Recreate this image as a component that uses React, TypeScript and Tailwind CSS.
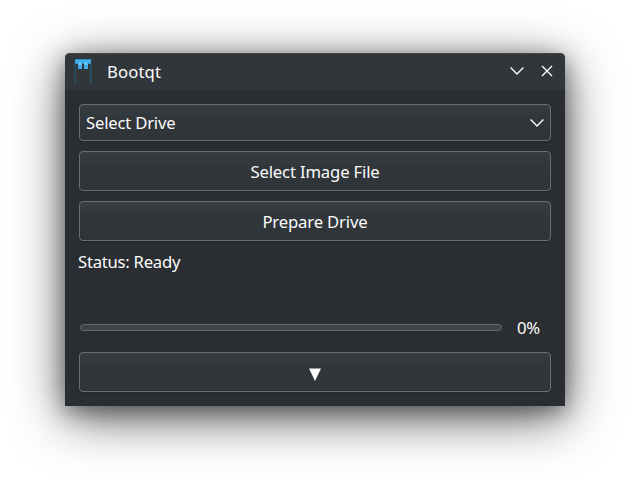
import type { ReactNode } from "react";

function Chevron({ className }: { className?: string }) {
  return (
    <svg className={className} width="16" height="10" viewBox="0 0 16 10" fill="none" stroke="#fcfcfc" strokeWidth="1.4">
      <path d="M1.6 1.6 L8 8 L14.4 1.6" />
    </svg>
  );
}

function AppIcon() {
  return (
    <svg width="18" height="24" viewBox="0 0 18 24" shapeRendering="crispEdges">
      <rect x="0" y="3" width="1" height="21" fill="#294454" />
      <rect x="1" y="3" width="1" height="21" fill="#2c4f63" />
      <rect x="16" y="3" width="1" height="21" fill="#2c566d" />
      <rect x="17" y="3" width="1" height="21" fill="#294454" />
      <rect x="1" y="0" width="16" height="1" fill="#2b91cb" />
      <rect x="1" y="1" width="16" height="3" fill="#3daee9" />
      <rect x="1" y="4" width="16" height="1" fill="#3093c8" />
      <rect x="4" y="4" width="4" height="6" fill="#3daee9" />
      <rect x="10" y="4" width="4" height="6" fill="#3daee9" />
      <rect x="5" y="3" width="2" height="3" fill="#74c8f3" />
      <rect x="11" y="3" width="2" height="3" fill="#74c8f3" />
    </svg>
  );
}

function Button({ children }: { children: ReactNode }) {
  return (
    <button className="flex h-10 w-full shrink-0 items-center justify-center rounded-[4px] border border-[#6a6e71] bg-linear-to-b from-[#393d41] via-[#31363a] via-40% to-[#2f3438] tracking-[-0.15px] shadow-[0_1px_1px_rgba(0,0,0,0.15)]">
      {children}
    </button>
  );
}

export default function App() {
  return (
    <div className="h-[483px] w-[630px] overflow-hidden bg-white px-[65px] pt-[53px] font-['Noto_Sans',sans-serif] text-[16.67px] leading-[23px] text-[#fcfcfc]">
      <div className="flex h-[353px] w-[500px] flex-col rounded-t-[5px] bg-[#2a2e32] shadow-[0_12px_52px_rgba(0,0,0,0.62),0_5px_22px_rgba(0,0,0,0.4)]">
        <header className="flex h-[37px] shrink-0 items-center rounded-t-[5px] border-t border-[#41464a] bg-[#31363b] pr-3 pb-0.5 pl-[9px]">
          <AppIcon />
          <span className="ml-[15px] grow tracking-[0.15px]">Bootqt</span>
          <Chevron className="mr-4" />
          <svg width="12" height="12" viewBox="0 0 12 12" stroke="#fcfcfc" strokeWidth="1.4">
            <path d="M1 1 L11 11 M11 1 L1 11" />
          </svg>
        </header>
        <main className="flex grow flex-col px-[14px] pt-[14px]">
          <button className="flex h-[37px] shrink-0 items-center justify-between rounded-[4px] border border-[#6a6e71] bg-linear-to-b from-[#393d41] via-[#31363a] via-40% to-[#2f3438] pr-[5px] pl-1.5 tracking-[-0.2px] shadow-[0_1px_1px_rgba(0,0,0,0.15)]">
            <span>Select Drive</span>
            <Chevron />
          </button>
          <div className="mt-2.5 flex flex-col gap-2.5">
            <Button>Select Image File</Button>
            <Button>Prepare Drive</Button>
          </div>
          <p className="mt-[9px] -ml-px tracking-[-0.25px]">Status: Ready</p>
          <div className="mt-[43px] flex h-[23px] items-center">
            <div className="ml-px h-[7px] w-[422px] rounded-full border border-[#65696c] bg-[#404447]" />
            <span className="ml-[15px] tracking-[-0.2px]">0%</span>
          </div>
          <div className="mt-[13px]">
            <Button>
              <svg width="12" height="14" viewBox="0 0 12 14" fill="#fcfcfc" className="mt-[5px]">
                <path d="M0 0.5 H12 L6 13 Z" />
              </svg>
            </Button>
          </div>
        </main>
      </div>
    </div>
  );
}
